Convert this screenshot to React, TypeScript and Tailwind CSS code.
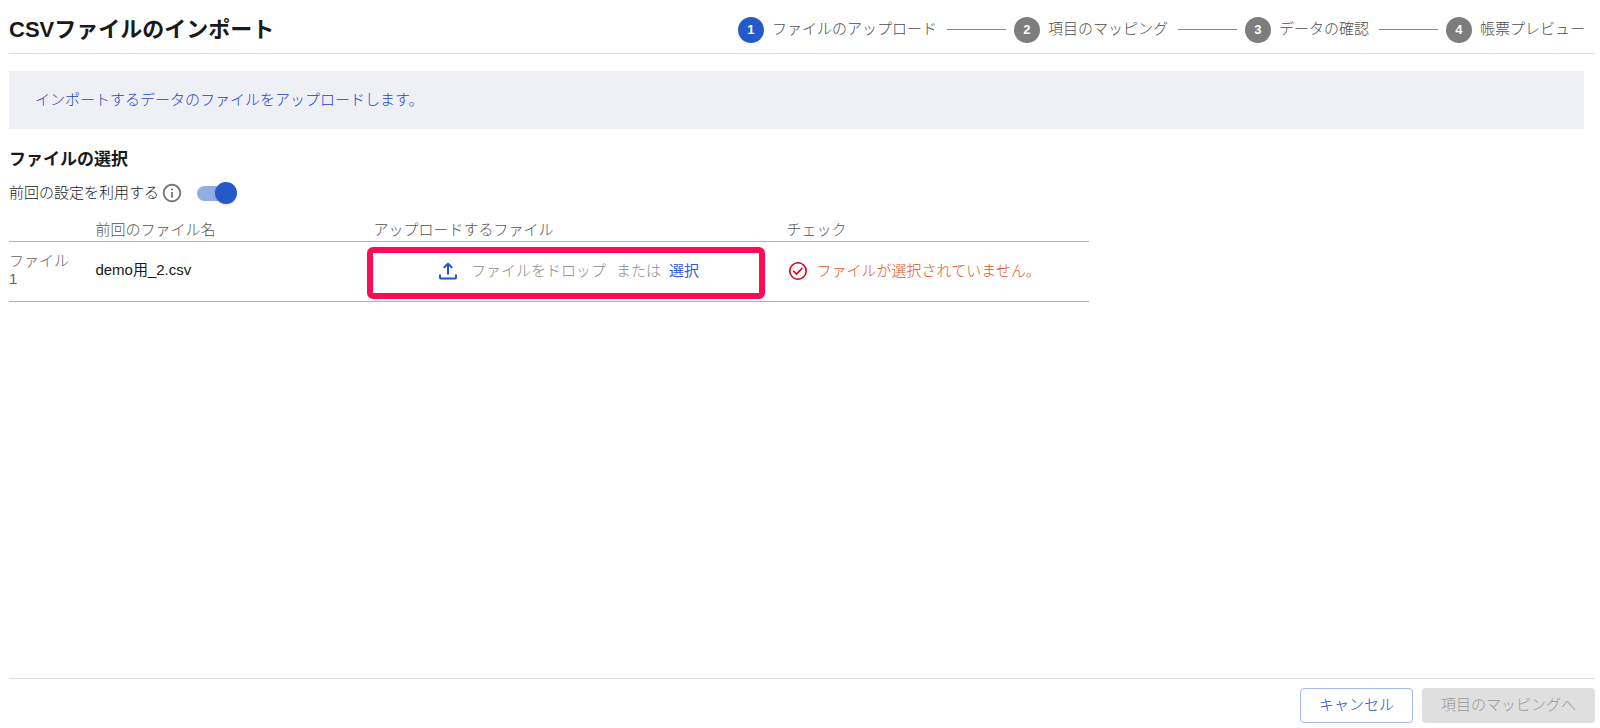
import { Fragment, useState } from "react";

const steps = ["ファイルのアップロード", "項目のマッピング", "データの確認", "帳票プレビュー"];

function Stepper() {
  return (
    <ol className="flex items-center">
      {steps.map((label, i) => (
        <Fragment key={label}>
          {i > 0 && <li aria-hidden="true" className="mr-2 ml-2.5 h-px w-[59px] bg-[#8c8c8c]" />}
          <li aria-current={i === 0 ? "step" : undefined} className="flex items-center gap-2">
            <span
              className={
                i === 0
                  ? "flex size-[26px] items-center justify-center rounded-full bg-[#2459c9] text-[13px] font-bold text-white"
                  : "flex size-[26px] items-center justify-center rounded-full bg-[#7d7d7d] text-[13px] font-bold text-white"
              }
            >
              {i + 1}
            </span>
            <span className="pb-0.5 font-light text-[#4d4d4d]">{label}</span>
          </li>
        </Fragment>
      ))}
    </ol>
  );
}

function InfoIcon() {
  return (
    <svg className="ml-0.5 size-[22px] text-[#757575]" viewBox="0 0 24 24" fill="currentColor" aria-hidden="true">
      <path d="M11 7h2v2h-2zm0 4h2v6h-2zm1-9C6.48 2 2 6.48 2 12s4.48 10 10 10 10-4.48 10-10S17.52 2 12 2zm0 18c-4.41 0-8-3.59-8-8s3.59-8 8-8 8 3.590 8 8-3.590 8-8 8z" />
    </svg>
  );
}

function UploadIcon() {
  return (
    <svg
      className="size-[22px] text-[#1f57cf]"
      viewBox="0 0 22 22"
      fill="none"
      stroke="currentColor"
      strokeWidth="2"
      strokeLinejoin="round"
      aria-hidden="true"
    >
      <path d="M11 14.500V4M6.800 7.800L11 3.600L15.200 7.800M3 14.500v3.200q0 .8 .8 .8h14.400q.8 0 .8-.8v-3.200" />
    </svg>
  );
}

function CheckCircleIcon() {
  return (
    <svg
      className="size-[22px] shrink-0 text-[#d9001b]"
      viewBox="0 0 22 22"
      fill="none"
      stroke="currentColor"
      strokeWidth="1.600"
      aria-hidden="true"
    >
      <circle cx="11" cy="11" r="8.200" />
      <path d="M6.200 10.800L9.500 14L15.300 8" />
    </svg>
  );
}

export default function App() {
  const [reuse, setReuse] = useState(true);

  return (
    <div className="flex min-h-screen flex-col bg-white pr-[5px] pb-[5px] pl-[9px] font-['Liberation_Sans','Noto_Sans_CJK_JP',sans-serif] text-[15px] leading-[18px] text-[#1a1a1a]">
      <header className="flex h-[54px] items-center justify-between border-b border-[#dcdcdc] pt-1.5 pr-2.5">
        <h1 className="text-[22px] leading-7 font-bold">CSVファイルのインポート</h1>
        <Stepper />
      </header>

      <main className="flex-1 pt-[17px]">
        <p className="mr-[11px] bg-[#eff0f5] px-[26px] py-5 font-light text-[#1746c4]">
          インポートするデータのファイルをアップロードします。
        </p>

        <h2 className="mt-[22px] text-[17px] font-bold">ファイルの選択</h2>

        <div className="mt-3 flex h-6 items-center">
          <label htmlFor="reuse" className="font-light">
            前回の設定を利用する
          </label>
          <InfoIcon />
          <input
            id="reuse"
            type="checkbox"
            role="switch"
            checked={reuse}
            onChange={(e) => setReuse(e.target.checked)}
            className="relative ml-3.5 h-[15px] w-[38px] appearance-none rounded-full bg-[#b5b5b5] before:absolute before:-top-1 before:left-0 before:size-[22px] before:rounded-full before:bg-white before:shadow checked:bg-[#92ace4] checked:before:left-[18px] checked:before:bg-[#2459c9]"
          />
        </div>

        <table className="mt-4 w-full max-w-[1080px] table-fixed border-collapse text-left">
          <colgroup>
            <col className="w-[8%]" />
            <col className="w-[25%]" />
            <col className="w-[39%]" />
            <col />
          </colgroup>
          <thead>
            <tr className="h-5 border-b border-[#b3b3b3] align-top text-[#555555]">
              <td />
              <th className="font-light">前回のファイル名</th>
              <th className="pl-2 font-light">アップロードするファイル</th>
              <th className="font-light">チェック</th>
            </tr>
          </thead>
          <tbody>
            <tr className="border-b border-[#b3b3b3]">
              <th className="pr-5 pb-0.5 font-light text-[#666666]">ファイル 1</th>
              <td className="pb-0.5">demo用_2.csv</td>
              <td className="pt-[5px] pr-[22px] pb-0.5 pl-0.5">
                <label className="flex h-[52px] cursor-pointer items-center justify-center rounded-md border-6 border-[#ff0a55] pb-1 pl-1 font-light text-[#8c8c8c]">
                  <UploadIcon />
                  <span className="ml-3">ファイルをドロップ</span>
                  <span className="ml-2.5">または</span>
                  <span className="ml-2 font-normal text-[#2f5fd0]">選択</span>
                  <input type="file" accept=".csv" className="sr-only" />
                </label>
              </td>
              <td>
                <p className="flex items-center gap-2 font-light text-[#e0561a]">
                  <CheckCircleIcon />
                  ファイルが選択されていません。
                </p>
              </td>
            </tr>
          </tbody>
        </table>
      </main>

      <footer className="flex justify-end gap-[9px] border-t border-[#dcdcdc] pt-[9px]">
        <button type="button" className="h-[35px] rounded border border-[#a3b8ee] px-[18px] pb-0.5 font-light text-[#1746c4]">
          キャンセル
        </button>
        <button type="button" disabled className="h-[35px] rounded bg-[#dfdfdf] px-[19px] pb-0.5 font-light text-[#999999]">
          項目のマッピングへ
        </button>
      </footer>
    </div>
  );
}
